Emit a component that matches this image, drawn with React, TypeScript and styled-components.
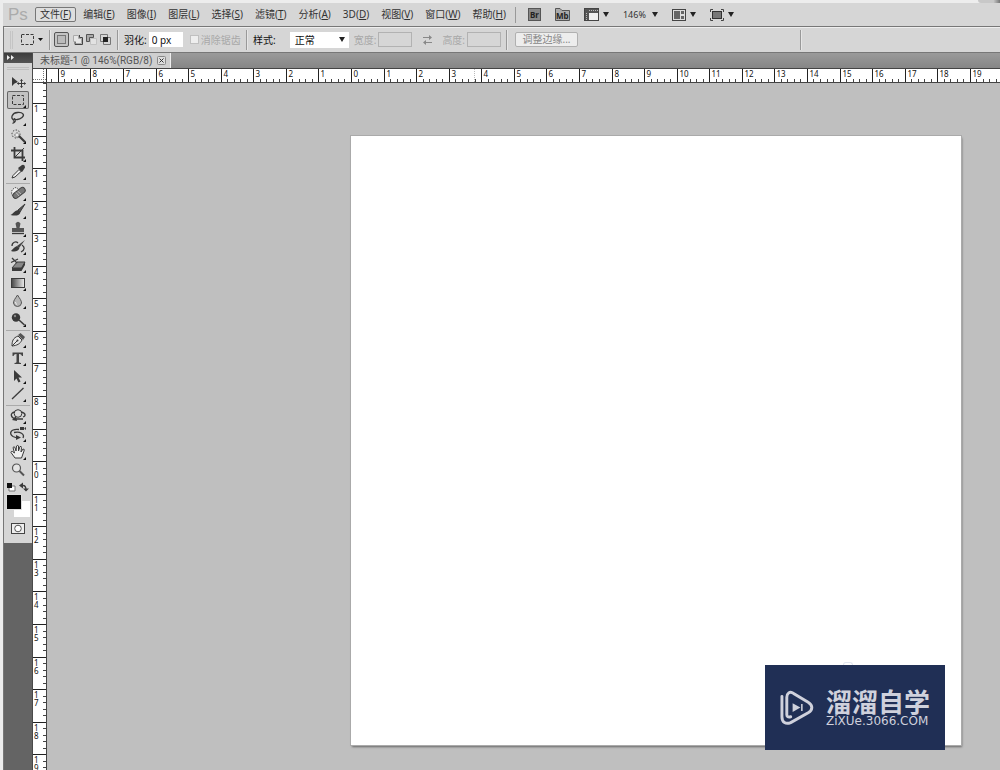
import React, { useEffect, useState } from "react";
import styled, { createGlobalStyle, css } from "styled-components";

const GlobalStyle = createGlobalStyle`
  *, *::before, *::after { box-sizing: border-box; }
  html, body { margin: 0; background: #ececec; }
  body, button, input, select {
    font-family: "Noto Sans", "Noto Sans CJK SC", sans-serif;
    font-size: 10px;
    line-height: 14px;
    color: #333;
  }
  button, input, select { margin: 0; padding: 0; border: 0; border-radius: 0; background: none; }
`;

const Shell = styled.div`
  display: flex;
  flex-direction: column;
  min-height: 100vh;
  padding-left: 3px;
  overflow: hidden;
`;

const WindowEdge = styled.div`
  display: flex;
  justify-content: flex-end;
  height: 3px;
  background: #ededed;
  &::after {
    content: "";
    width: 22px;
    background: linear-gradient(90deg, #c8c8c8 70%, #777);
    border-bottom-left-radius: 4px;
  }
`;

const MenuBar = styled.header`
  display: flex;
  align-items: center;
  height: 23px;
  background: #d6d6d6;
`;

const Brand = styled.span`
  width: 32px;
  padding-left: 5px;
  font-family: "Liberation Sans", sans-serif;
  font-size: 17px;
  line-height: 22px;
  color: #ababab;
`;

const MenuList = styled.nav`
  display: flex;
  gap: 2px;
`;

const MenuButton = styled.button<{ $open?: boolean }>`
  height: 15px;
  padding: 0 4px;
  border: 1px solid ${(p) => (p.$open ? "#777" : "transparent")};
  border-radius: 2px;
  background: ${(p) => (p.$open ? "#dedede" : "transparent")};
  line-height: 13px;
  white-space: nowrap;
`;

const AppTools = styled.div`
  display: flex;
  align-items: center;
  height: 16px;
  margin-left: 4px;
  padding-left: 12px;
  gap: 14px;
  border-left: 1px solid #999;
`;

const AppButton = styled.button`
  display: flex;
  align-items: center;
  gap: 4px;
  height: 14px;
`;

const PlainSelect = styled.select`
  appearance: none;
  width: 29px;
  height: 14px;
  font-size: 9px;
`;

const ZoomField = styled.label`
  display: flex;
  align-items: center;
`;

const OptionsBar = styled.section`
  display: flex;
  align-items: center;
  height: 27px;
  border: solid #777;
  border-width: 1px 0 1px 1px;
  background: #d6d6d6;
  box-shadow: inset 0 1px #eee;
`;

const OptionGroup = styled.div<{ $width: number; $gap?: number; $pad?: number }>`
  display: flex;
  flex: none;
  align-items: center;
  gap: ${(p) => p.$gap ?? 3}px;
  width: ${(p) => p.$width}px;
  height: 20px;
  padding-left: ${(p) => p.$pad ?? 6}px;
  border-right: 1px solid #999;
  box-shadow: 1px 0 #e6e6e6;
`;

const Grip = styled.span`
  width: 3px;
  height: 18px;
  margin-right: 5px;
  border: solid #c4c4c4;
  border-width: 0 1px;
`;

const ModeButton = styled.button<{ $on?: boolean }>`
  display: flex;
  align-items: center;
  justify-content: center;
  width: ${(p) => (p.$on ? 15 : 11)}px;
  height: 15px;
  ${(p) =>
    p.$on &&
    css`
      border: 1px solid #555;
      border-radius: 2px;
      background: #c4c4c4;
    `}
`;

const Field = styled.label<{ $off?: boolean; $gap?: number }>`
  display: flex;
  align-items: center;
  gap: ${(p) => p.$gap ?? 2}px;
  white-space: nowrap;
  color: ${(p) => (p.$off ? "#a8a8a8" : "#111")};
`;

const TextBox = styled.input<{ $width: number }>`
  width: ${(p) => p.$width}px;
  height: 15px;
  padding: 0 3px;
  background: #fff;
  color: #111;
  &:disabled {
    border: 1px solid #b2b2b2;
    background: #d6d6d6;
  }
`;

const Tick = styled.input`
  appearance: none;
  width: 9px;
  height: 9px;
  border: 1px solid #c0c0c0;
  background: #eee;
`;

const StyleSelect = styled.span`
  display: flex;
  align-items: center;
  width: 59px;
  height: 16px;
  padding-right: 4px;
  background: #fff;
  select {
    appearance: none;
    flex: 1;
    min-width: 0;
    height: 16px;
    padding-left: 5px;
    color: #111;
  }
`;

const RefineButton = styled.button`
  width: 63px;
  height: 15px;
  margin-left: 2px;
  border: 1px solid #b0b0b0;
  border-radius: 2px;
  background: #ededed;
  line-height: 13px;
  color: #888;
`;

const Body = styled.div`
  display: flex;
  flex: 1;
  min-height: 717px;
`;

const Dock = styled.aside`
  display: flex;
  flex: none;
  flex-direction: column;
  width: 30px;
  background: #646464;
  border-left: 1px solid #777;
  border-right: 1px solid #4a4a4a;
`;

const DockHead = styled.button`
  display: flex;
  align-items: flex-start;
  height: 10px;
  padding: 2px 3px;
  background: linear-gradient(#3c3c3c, #555);
`;

const ToolPanel = styled.div`
  display: flex;
  flex-direction: column;
  align-items: center;
  height: 480px;
  padding-top: 4px;
  background: #d6d6d6;
`;

const PanelGrip = styled.span`
  width: 22px;
  height: 3px;
  margin-bottom: 3px;
  border: solid #c0c0c0;
  border-width: 1px 0;
`;

const ToolGroup = styled.div`
  display: flex;
  flex-direction: column;
  align-items: center;
  width: 24px;
  margin-bottom: 2px;
  & + & { border-top: 1px solid #aaa; }
  &:last-of-type { padding-top: 1px; }
`;

const ToolButton = styled.button<{ $on?: boolean }>`
  display: block;
  height: 18px;
  width: 22px;
  border-radius: 2px;
  ${(p) =>
    p.$on &&
    css`
      background: #c2c2c2;
      box-shadow: inset 0 0 0 1px #666;
    `}
  svg { display: block; margin: 0 auto; }
`;

const BareButton = styled.button`
  display: block;
  svg { display: block; }
`;

const Workspace = styled.main`
  display: flex;
  flex: 1;
  flex-direction: column;
  min-width: 0;
`;

const TabStrip = styled.div`
  display: flex;
  align-items: flex-end;
  height: 15px;
  background: linear-gradient(#9a9a9a, #868686);
`;

const Tab = styled.div`
  display: flex;
  align-items: center;
  gap: 5px;
  height: 15px;
  padding: 0 4px 0 7px;
  border-right: 1px solid #eee;
  background: #cfcfcf;
  font-family: Roboto, "Noto Sans CJK SC", sans-serif;
  color: #555;
  white-space: nowrap;
`;

const RulerRow = styled.div`
  display: flex;
  height: 15px;
  background: #fff;
  border: solid #444;
  border-width: 1px 0;
`;

const Stage = styled.div`
  display: flex;
  flex: 1;
  min-height: 0;
`;

const RulerSvg = styled.svg`
  display: block;
  flex: 1;
  min-width: 0;
  height: 13px;
  overflow: hidden;
`;

const SideRuler = styled.div`
  flex: none;
  width: 14px;
  height: 687px;
  background: #fff;
  border-right: 1px solid #444;
  overflow: hidden;
`;

const Pasteboard = styled.div`
  flex: 1;
  min-width: 0;
  padding: 53px 0 0 304px;
  background: #bfbfbf;
  overflow: hidden;
`;

const Paper = styled.div`
  width: 610px;
  height: 609px;
  background: #fff;
  box-shadow: 0 0 0 1px #aaa, 1px 2px 2px #666;
`;

const Watermark = styled.div`
  position: absolute;
  left: 765px;
  top: 665px;
  display: flex;
  align-items: center;
  gap: 12px;
  width: 180px;
  height: 85px;
  padding-left: 15px;
  background: #202f55;
  color: #cfd1dc;
  &::before {
    content: "";
    position: absolute;
    left: 78px;
    top: -3px;
    width: 10px;
    height: 3px;
    border: 1px solid #e2e6ee;
    border-bottom: 0;
    border-radius: 5px 5px 0 0;
  }
`;

const MarkText = styled.div`
  display: flex;
  flex-direction: column;
  white-space: nowrap;
  strong {
    font: 700 26px/26px "Noto Sans CJK SC", sans-serif;
  }
  span {
    font: 12px/14px "DejaVu Sans", sans-serif;
  }
`;

const Caret = () => (
  <svg width="6" height="5" viewBox="0 0 6 5" aria-hidden="true">
    <path d="M0 0H6L3 5Z" fill="#222" />
  </svg>
);

const menus: [string, string][] = [
  ["文件", "F"], ["编辑", "E"], ["图像", "I"], ["图层", "L"], ["选择", "S"], ["滤镜", "T"],
  ["分析", "A"], ["3D", "D"], ["视图", "V"], ["窗口", "W"], ["帮助", "H"],
];

type Tool = { name: string; art: React.ReactNode; single?: boolean };

const dark = "#3a3a3a";
const line = { fill: "none", stroke: dark, strokeWidth: 1.3 } as const;

const toolGroups: Tool[][] = [
  [
    { name: "移动", single: true, art: <><path d="M4 4V13L6.500 10.500 10 9Z" fill={dark} /><path d="M13.500 6.500V14.500M9.500 10.500H17.500" {...line} strokeWidth={1} /><path d="M12 8 13.500 6 15 8ZM12 13 13.500 15 15 13ZM11 9 9 10.500 11 12ZM16 9 18 10.500 16 12Z" fill={dark} /></> },
    { name: "矩形选框", art: <rect x="4.500" y="4.500" width="11" height="9" {...line} strokeWidth={1} strokeDasharray="3 1.500" /> },
    { name: "套索", art: <><path d="M6 11C2 9 4 4 9.500 3.500 15 3 17 6 14 8.500 11 11 7 11 6 9.500" {...line} /><path d="M6 9.500C8 11 8 13 4.500 14.500M5 11.500 7 13" {...line} /></> },
    { name: "魔棒", art: <><circle cx="8" cy="7" r="4" {...line} strokeWidth={1} strokeDasharray="1.500 1.500" /><path d="M8 7 9 5 10 7 12 8 10 9 9 11 8 9 6 8Z" fill="#eee" stroke="#777" strokeWidth=".6" /><path d="M11 9 17 15" stroke={dark} strokeWidth="2.200" /></> },
    { name: "裁剪", art: <><path d="M6.500 2V12.500H17M3 5.500H14.500V16" {...line} strokeWidth={1.8} /><path d="M6 13 16 3" {...line} strokeWidth={1} /></> },
    { name: "吸管", art: <><path d="M4 15 5 12.500 11 6.500 13 8.500 7 14Z" fill="#eee" stroke={dark} /><path d="M10 5 12 3.500 14 2Q17 1 17 4.500L14.500 8.500 13.500 9Z" fill={dark} /></> },
  ],
  [
    { name: "修复画笔", art: <><path d="M6 14 3.500 10 4 6 7 3.500 10 4.500" fill="#f2f2f2" stroke="#555" strokeDasharray="1.500 1" /><rect x="4" y="6.500" width="14" height="5.500" rx="2.500" transform="rotate(-38 10.500 9)" fill="#777" stroke="#444" /><path d="M9.500 7 13 10M8 8.500 11 12" stroke="#bbb" /></> },
    { name: "画笔", art: <><path d="M17 2 10 8 12 10Z" fill="#555" stroke={dark} /><path d="M10 8 12.500 10.500C11 14 7 14 2.500 13 5 12 6 9 10 8Z" fill={dark} /></> },
    { name: "仿制图章", art: <><path d="M7.500 3.500Q10 0 12.500 3.500L11.500 8H16V12H4V8H8.500Z" fill="#555" /><path d="M4 13.500H16" {...line} /></> },
    { name: "历史记录画笔", art: <><path d="M17 2 9 8 11 10Z" fill="#444" /><path d="M9 8 11.500 10C10 14 6 14 3 13 5 11 6 9 9 8Z" fill={dark} /><path d="M4 8C4 4 8 3 10 5M13 14C17 12 17 9 14 7" {...line} /></> },
    { name: "橡皮擦", art: <><path d="M4 12 9 6H17L13.500 12Z" fill="#888" stroke={dark} /><path d="M4 12H13.500V15H4ZM13.500 12 17 6V9L13.500 15Z" fill={dark} /><path d="M4 2 9 7M3 6.500 10 3" {...line} /></> },
    { name: "渐变", art: <><defs><linearGradient id="fade"><stop stopColor="#444" /><stop offset="1" stopColor="#eee" /></linearGradient></defs><rect x="3.500" y="4.500" width="13" height="9" fill="url(#fade)" stroke={dark} /></> },
    { name: "模糊", art: <><path d="M9.500 3C12 7 13.500 8.500 13.500 11Q13 14.500 9.500 14.500T5.500 11C5.500 8.500 7 7 9.500 3Z" fill="#b5b5b5" stroke="#555" /><path d="M7.500 10Q7.500 12 9 12.500" fill="none" stroke="#eee" /></> },
    { name: "加深减淡", art: <><path d="M11 10 16.500 15" stroke={dark} strokeWidth="1.600" /><circle cx="8" cy="7.500" r="4.200" fill={dark} /><circle cx="7" cy="6" r="1.200" fill="#888" /></> },
  ],
  [
    { name: "钢笔", art: <><path d="M4 15C4 10 5 7 10 5L14 9C12 13 9 14.500 4 15Z" fill="#e5e5e5" stroke={dark} /><path d="M10 4 12.500 2 17 6 15 9Z" fill="#555" /><path d="M4 15 9 10" {...line} strokeWidth={1} /><circle cx="9.500" cy="9.500" r="1" fill={dark} /></> },
    { name: "文字", art: <path d="M4.500 3.500H15V7H14Q13.500 4.800 11 5V13Q11 14 13 14V15H6.500V14Q8.500 14 8.500 13V5Q6 4.800 5.500 7H4.500Z" fill="#444" /> },
    { name: "路径选择", art: <path d="M6 3V14L8.500 11.500 10.500 15.500 12.500 14.500 10.500 10.500H14Z" fill={dark} /> },
    { name: "直线", art: <path d="M4 14 15.500 3" {...line} /> },
  ],
  [
    { name: "3D 旋转", art: <><circle cx="10" cy="6.500" r="3.800" fill="#ddd" stroke={dark} /><path d="M7 5C1 6 3 11 8 12L15 12M13 5C18 6 18 9 15 10" {...line} /><path d="M4 13 8 9 9 14Z" fill={dark} /></> },
    { name: "3D 相机", art: <><path d="M11 4.500C2 3.500 1 9 5 11.500L9 13M6 7.500C12 6 17 9 15 13" {...line} /><path d="M8 15 13 12.500 8 10ZM12 2H16V5H12ZM16.500 3 18 2V5L16.500 4Z" fill={dark} /></> },
    { name: "抓手", art: <path d="M7 15 3 9.500Q3 8 4.500 8.500L6.500 10 5 4.500Q6 3 7 4.500L8 8 8.500 3Q10 1.500 10.500 3V8L12 3.500Q13.500 3 13.500 4.500L13 9 15 6Q17 6 16 8L13.500 15Z" fill="#eee" stroke={dark} /> },
    { name: "缩放", single: true, art: <><circle cx="8.500" cy="7" r="4" fill="#e5e5e5" stroke="#555" strokeWidth="1.200" /><path d="M11.500 10 16 14.500" stroke="#555" strokeWidth="2" /></> },
  ],
];

const UNIT = 32.57;

const marks = (from: number, to: number) =>
  Array.from({ length: to - from + 1 }, (_, i) => from + i);

const rulerFont = { fontFamily: "Noto Sans, sans-serif", fontSize: 8, fill: "#111" };

function useWindowWidth() {
  const [width, setWidth] = useState(window.innerWidth);
  useEffect(() => {
    const update = () => setWidth(window.innerWidth);
    window.addEventListener("resize", update);
    return () => window.removeEventListener("resize", update);
  }, []);
  return width;
}

function TopRuler() {
  const origin = 304;
  const last = Math.max(0, Math.floor((useWindowWidth() - 47 - origin - 12) / UNIT));
  const at = (v: number) => Math.round(origin + v * UNIT) + 0.5;
  return (
    <RulerSvg role="img" aria-label="水平标尺">
      {marks(-9, last).map((n) => (
        <g key={n}>
          <path d={`M${at(n)} 0V13`} stroke="#222" />
          {[1, 2, 3, 4].map((k) => (
            <path key={k} d={`M${at(n + k / 5)} 10V13`} stroke="#444" />
          ))}
          <text x={at(n) + 2} y="8" {...rulerFont}>{Math.abs(n)}</text>
        </g>
      ))}
      <path d={`M${at(-9.2)} 10V13`} stroke="#444" />
      <path d="M427.500 0V13" stroke="#bbb" strokeDasharray="1 1" />
    </RulerSvg>
  );
}

function LeftRuler() {
  const at = (v: number) => Math.round(52.5 + v * UNIT) + 0.5;
  return (
    <svg width="13" height="687" role="img" aria-label="垂直标尺">
      {[1, 2, 3, 4].map((k) => (
        <path key={k} d={`M10 ${at(-2 + k / 5)}H13`} stroke="#444" />
      ))}
      {marks(-1, 19).map((n) => (
        <g key={n}>
          <path d={`M0 ${at(n)}H13`} stroke="#222" />
          {[1, 2, 3, 4].map((k) => (
            <path key={k} d={`M10 ${at(n + k / 5)}H13`} stroke="#444" />
          ))}
          {String(Math.abs(n)).split("").map((digit, i) => (
            <text key={i} x="1" y={at(n) + 8 + i * 8} {...rulerFont}>{digit}</text>
          ))}
        </g>
      ))}
    </svg>
  );
}

export default function App() {
  return (
    <Shell>
      <GlobalStyle />
      <WindowEdge />
      <MenuBar>
        <Brand>Ps</Brand>
        <MenuList>
          {menus.map(([label, key], i) => (
            <MenuButton key={label} $open={i === 0}>
              {label}(<u>{key}</u>)
            </MenuButton>
          ))}
        </MenuList>
        <AppTools>
          <AppButton aria-label="Bridge">
            <svg width="13" height="13"><rect x=".5" y=".5" width="12" height="12" fill="#888" stroke="#555" /><text x="2" y="10" fontSize="8" fontWeight="700" fill="#222">Br</text></svg>
          </AppButton>
          <AppButton aria-label="Mini Bridge">
            <svg width="15" height="13"><path d="M.5 12.500V.5H5L7 2.500H14.500V12.500Z" fill="#aaa" stroke="#555" /><text x="1" y="11" fontSize="8" fontWeight="700" fill="#222">Mb</text></svg>
          </AppButton>
          <AppButton aria-label="查看额外内容">
            <svg width="15" height="13"><rect x=".5" y=".5" width="14" height="12" fill="#555" stroke="#444" /><rect x="5" y="5" width="9" height="7" fill="#eee" /><path d="M5 2.500H14M2.500 5V12" stroke="#bbb" strokeDasharray="1 1" /></svg>
            <Caret />
          </AppButton>
          <ZoomField>
            <PlainSelect aria-label="缩放级别"><option>146%</option></PlainSelect>
            <Caret />
          </ZoomField>
          <AppButton aria-label="排列文档">
            <svg width="14" height="12"><rect x=".5" y=".5" width="13" height="11" fill="#ddd" stroke="#444" /><path d="M2 2H8V10H2ZM9 2H12V5H9ZM9 7H12V10H9Z" fill="#666" /></svg>
            <Caret />
          </AppButton>
          <AppButton aria-label="屏幕模式">
            <svg width="14" height="12"><rect x="2.500" y="2.500" width="9" height="7" fill="#777" stroke="#333" /><path d="M.5 3V.5H3M11 .5H13.500V3M13.500 9V11.500H11M3 11.500H.5V9" fill="none" stroke="#444" /></svg>
            <Caret />
          </AppButton>
        </AppTools>
      </MenuBar>

      <OptionsBar>
        <OptionGroup $width={46}>
          <Grip />
          <AppButton aria-label="工具预设">
            <svg width="13" height="12"><rect x=".5" y=".5" width="12" height="10" {...line} strokeWidth={1} strokeDasharray="3 1.500" /></svg>
            <svg width="5" height="3"><path d="M0 0H5L2.500 3Z" fill="#111" /></svg>
          </AppButton>
        </OptionGroup>
        <OptionGroup $width={68} $pad={4}>
          <ModeButton $on aria-label="新选区">
            <svg width="9" height="9"><rect x=".5" y=".5" width="8" height="8" fill="#bbb" stroke="#777" /></svg>
          </ModeButton>
          <ModeButton aria-label="添加到选区">
            <svg width="11" height="11"><path d="M1.500 1.500H6.500V4.500H9.500V9.500H3.500V7.500H1.500Z" fill="#e6e6e6" stroke="#aaa" /><path d="M7.500 1V3.500H10.500V10.500H3V8" fill="none" stroke="#444" /></svg>
          </ModeButton>
          <ModeButton aria-label="从选区减去">
            <svg width="11" height="11"><path d="M4.500 4.500H10.500V10.500H4.500Z" fill="#e2e2e2" stroke="#c2c2c2" /><path d="M.5 .5H7.500V3.500H3.500V7.500H.5Z" fill="#aaa" stroke="#555" /></svg>
          </ModeButton>
          <ModeButton aria-label="与选区交叉">
            <svg width="11" height="11"><path d="M.5 .5H7.500V7.500H.5ZM3.500 3.500H10.500V10.500H3.500Z" fill="none" stroke="#777" /><rect x="3" y="3" width="5" height="5" fill="#222" /></svg>
          </ModeButton>
        </OptionGroup>
        <OptionGroup $width={129} $gap={7}>
          <Field>羽化:<TextBox $width={34} defaultValue="0 px" /></Field>
          <Field $off $gap={2}><Tick type="checkbox" disabled />消除锯齿</Field>
        </OptionGroup>
        <OptionGroup $width={260} $gap={5}>
          <Field $gap={14}>样式:
            <StyleSelect>
              <select><option>正常</option></select>
              <Caret />
            </StyleSelect>
          </Field>
          <Field $off>宽度:<TextBox $width={34} disabled /></Field>
          <AppButton aria-label="高度和宽度互换">
            <svg width="20" height="10"><path d="M6 2.500H13M7 7.500H15" stroke="#888" /><path d="M12 0V5L15 2.500ZM9 5V10L6 7.500Z" fill="#888" /></svg>
          </AppButton>
          <Field $off>高度:<TextBox $width={34} disabled /></Field>
        </OptionGroup>
        <OptionGroup $width={294}>
          <RefineButton>调整边缘...</RefineButton>
        </OptionGroup>
      </OptionsBar>

      <Body>
        <Dock>
          <DockHead aria-label="展开面板">
            <svg width="7" height="5"><path d="M0 0 3 2.500 0 5ZM4 0 7 2.500 4 5Z" fill="#eee" /></svg>
          </DockHead>
          <ToolPanel>
            <PanelGrip />
            {toolGroups.map((group, g) => (
              <ToolGroup key={g}>
                {group.map((tool) => (
                  <ToolButton key={tool.name} aria-label={tool.name} $on={tool.name === "矩形选框"}>
                    <svg width="20" height="18" viewBox="0 0 20 18">
                      {tool.art}
                      {!tool.single && <path d="M18 14V17H15Z" fill="#111" />}
                    </svg>
                  </ToolButton>
                ))}
              </ToolGroup>
            ))}
            <BareButton aria-label="前景色和背景色">
              <svg width="24" height="38" viewBox="0 0 24 38">
                <path d="M3 5H9V10H3Z" fill="#fff" stroke="#777" />
                <path d="M1 2H6V7H1Z" fill="#111" />
                <path d="M15 4.500H17Q20 4.500 20 9" {...line} />
                <path d="M13 4.500 17 1.500V7.500ZM17 7.500H23L20 10.500Z" fill={dark} />
                <rect x="8" y="20" width="16" height="16" fill="#fff" />
                <rect x=".5" y="13.500" width="15" height="15" fill="#000" stroke="#ddd" />
              </svg>
            </BareButton>
            <ToolButton aria-label="快速蒙版">
              <svg width="14" height="18"><rect x=".5" y="4.500" width="13" height="10" fill="#eee" stroke="#444" /><circle cx="7" cy="9.500" r="3.300" fill="#fff" stroke="#555" /></svg>
            </ToolButton>
          </ToolPanel>
        </Dock>

        <Workspace>
          <TabStrip>
            <Tab>
              未标题-1 @ 146%(RGB/8)
              <BareButton aria-label="关闭">
                <svg width="9" height="9"><rect x=".5" y=".5" width="8" height="8" rx="1" fill="#ddd" stroke="#888" /><path d="M2.500 2.500 6.500 6.500M6.500 2.500 2.500 6.500" stroke="#333" /></svg>
              </BareButton>
            </Tab>
          </TabStrip>
          <RulerRow>
            <svg width="14" height="13" aria-hidden="true">
              <path d="M0 10.500H13M10.500 0V13" stroke="#777" strokeDasharray="1 1" />
              <path d="M13.500 0V13" stroke="#333" />
            </svg>
            <TopRuler />
          </RulerRow>
          <Stage>
            <SideRuler><LeftRuler /></SideRuler>
            <Pasteboard><Paper /></Pasteboard>
          </Stage>
        </Workspace>
      </Body>

      <Watermark>
        <svg width="34" height="36" viewBox="0 0 35 36" fill="none" stroke="#cfd1dc" strokeWidth="3" strokeLinecap="round" aria-hidden="true">
          <path d="M2 6V27C2 33 6 35 11 33L29 23C34 20 34 15 29 12L14 3C10 0 7 3 7 7V25Q7 28 11 27" />
          <path d="M13 13 21 17.500 13 22Z" fill="#cfd1dc" stroke="none" />
          <path d="M22.500 14V21" strokeWidth="1.600" strokeLinecap="butt" />
        </svg>
        <MarkText>
          <strong>溜溜自学</strong>
          <span>ZiXUe.3066.COM</span>
        </MarkText>
      </Watermark>
    </Shell>
  );
}
